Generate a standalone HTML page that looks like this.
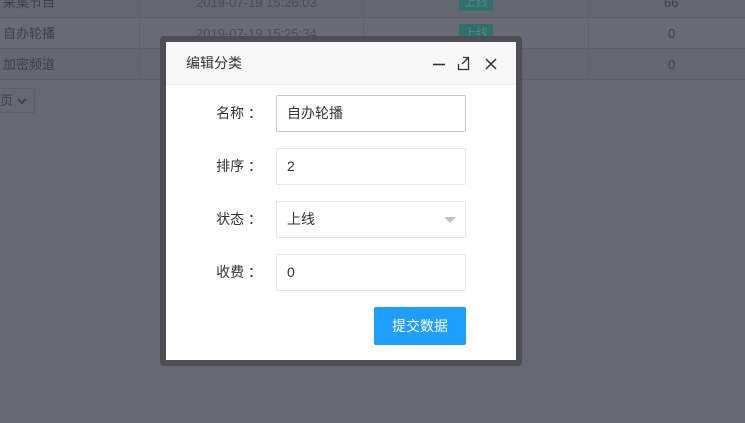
<!DOCTYPE html>
<html><head><meta charset="utf-8"><style>
*{margin:0;padding:0;box-sizing:border-box}
body{width:745px;height:423px;overflow:hidden;background:#666871;font-family:"Liberation Sans","Noto Sans CJK SC",sans-serif;position:relative}
.row{position:absolute;left:0;width:745px;height:31px;border-bottom:1px solid #5d5f67;font-size:13px;color:#3f4148}
.c{position:absolute;top:0;height:31px;line-height:31px}
.d{color:#4c4e55}
.v{position:absolute;top:0;width:1px;background:#5f6169}
.badge{position:absolute;left:459px;top:6px;width:34px;height:18px;background:#2f6f6c;color:#5b8583;font-size:12px;line-height:18px;text-align:center;border-radius:2px}
.modal{position:absolute;left:160px;top:36px;width:362px;height:330px;background:#4d4f55;border-radius:4px}
.in{position:absolute;left:6px;top:6px;width:350px;height:318px;background:#fff}
.hd{height:43px;background:#f8f8f8;border-bottom:1px solid #eee;font-size:14px;color:#333;line-height:43px;padding-left:20px;position:relative}
.lbl{position:absolute;left:0;width:96px;text-align:right;font-size:14px;color:#333;line-height:37px}
.inp{position:absolute;left:110px;width:190px;height:37px;border:1px solid #e6e6e6;border-radius:2px;font-size:14px;color:#333;line-height:35px;padding-left:10px}
.btn{position:absolute;left:208px;top:265px;width:92px;height:38px;background:#1E9FFF;color:#fff;font-size:14px;line-height:38px;text-align:center;border-radius:2px}
</style></head><body>
<div class="row" style="top:-13px;background:#656770"><span class="c" style="left:3px">采集节目</span><span class="c d" style="left:196px">2019-07-19 15:26:03</span><div class="badge">上线</div><span class="c" style="left:664px">66</span></div>
<div class="row" style="top:18px;background:#696b74"><span class="c" style="left:3px">自办轮播</span><span class="c d" style="left:196px">2019-07-19 15:25:34</span><div class="badge">上线</div><span class="c" style="left:668px">0</span></div>
<div class="row" style="top:49px;background:#656770"><span class="c" style="left:3px">加密频道</span><span class="c" style="left:668px">0</span></div>
<div class="v" style="left:139px;height:80px"></div>
<div class="v" style="left:363px;height:80px"></div>
<div class="v" style="left:588px;height:80px"></div>
<div style="position:absolute;left:-10px;top:88px;width:45px;height:25px;border:1px solid #5d5f67;font-size:13px;color:#3f4148;line-height:23px;padding-left:9px">页
<svg style="position:absolute;left:26px;top:9px" width="10" height="7" viewBox="0 0 10 7" fill="none" stroke="#3f4148" stroke-width="2"><path d="M1 1l4 4 4-4"/></svg></div>
<div class="modal"><div class="in">
<div class="hd">编辑分类
<svg style="position:absolute;left:266px;top:14px" width="70" height="16" viewBox="0 0 70 16" fill="none" stroke="#333" stroke-width="1.6"><path d="M1 8.5H13"/><path d="M31 1.5h5.5v12H29.5M36 2l-6 6M26.5 8v5.5h3" stroke-width="1.3"/><path d="M54 3l10 10M64 3L54 13" stroke-width="1.5"/></svg></div>
<div class="lbl" style="top:53px">名称 ：</div><div class="inp" style="top:53px;border-color:#c9c9c9">自办轮播</div>
<div class="lbl" style="top:106px">排序 ：</div><div class="inp" style="top:106px">2</div>
<div class="lbl" style="top:159px">状态 ：</div><div class="inp" style="top:159px">上线<span style="position:absolute;right:9px;top:15px;border:6px solid transparent;border-top-color:#c2c2c2;border-bottom:0"></span></div>
<div class="lbl" style="top:212px">收费 ：</div><div class="inp" style="top:212px">0</div>
<div class="btn">提交数据</div>
</div></div>
</body></html>
